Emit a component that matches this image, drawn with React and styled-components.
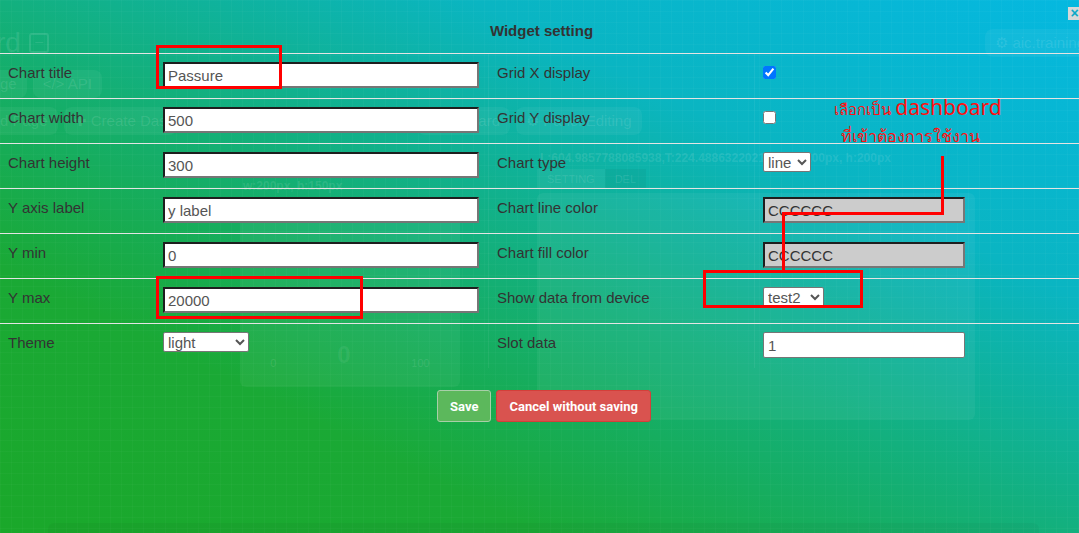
import styled, { createGlobalStyle } from "styled-components";

const GlobalStyle = createGlobalStyle`
  html, body {
    margin: 0;
    padding: 0;
  }
  body {
    width: 1079px;
    height: 533px;
    overflow: hidden;
    font-family: "Liberation Sans", Arial, sans-serif;
  }
`;

const rows = [
  { label: "Chart title", value: "Passure", right: "Grid X display", kind: "check", checked: true },
  { label: "Chart width", value: "500", right: "Grid Y display", kind: "check", checked: false },
  { label: "Chart height", value: "300", right: "Chart type", kind: "select", options: ["line"], w: 48 },
  { label: "Y axis label", value: "y label", right: "Chart line color", kind: "color", color: "CCCCCC" },
  { label: "Y min", value: "0", right: "Chart fill color", kind: "color", color: "CCCCCC" },
  { label: "Y max", value: "20000", right: "Show data from device", kind: "select", options: ["test2"], w: 61 },
  { label: "Theme", select: ["light"], right: "Slot data", kind: "slot", value2: "1" },
];

export default function App() {
  return (
    <Page>
      <GlobalStyle />
      <Dashboard>
        <GhostHeader>
          <GhostTitle>
            rd <GhostIcon>−</GhostIcon>
          </GhostTitle>
          <GhostPill>⚙ aic.training</GhostPill>
        </GhostHeader>
        <GhostRow $y={70} $x={-10}>
          <GhostPill>ge</GhostPill>
          <GhostPill>&lt;/&gt; API</GhostPill>
        </GhostRow>
        <GhostRow $y={107} $x={-10}>
          <GhostPill>d Page</GhostPill>
          <GhostPill $gap={234}>✚ Create Das</GhostPill>
          <GhostPill>Dashboard</GhostPill>
          <GhostPill>⚙ Panel Editing</GhostPill>
        </GhostRow>
        <Widget $x={240} $y={179} $w={220} $h={208}>
          <GhostText>w:200px, h:150px</GhostText>
          <GhostPanel>
            <GaugeRow>
              <span>0</span>
              <strong>0</strong>
              <span>100</span>
            </GaugeRow>
          </GhostPanel>
        </Widget>
        <Widget $x={537} $y={151} $w={438} $h={269}>
          <GhostText>L:604.9857788085938,T:224.4886322021484, w:200px, h:200px</GhostText>
          <GhostTabs>
            <span>SETTING</span>
            <b>DEL</b>
          </GhostTabs>
          <GhostPanel />
        </Widget>
        <GhostBar />
      </Dashboard>

      <Modal>
        <CloseBox>×</CloseBox>
        <Title>Widget setting</Title>
        <Table>
          {rows.map((r) => (
            <Row key={r.label}>
              <Cell>
                <Label>{r.label}</Label>
              </Cell>
              <Cell>
                {r.select ? (
                  <Select $w={86} defaultValue={r.select[0]}>
                    {r.select.map((o) => (
                      <option key={o}>{o}</option>
                    ))}
                  </Select>
                ) : (
                  <TextInput readOnly value={r.value} />
                )}
              </Cell>
              <Cell $divider>
                <Label>{r.right}</Label>
              </Cell>
              <Cell $divider>
                {r.kind === "check" && <Check type="checkbox" readOnly checked={r.checked} />}
                {r.kind === "select" && (
                  <Select $w={r.w} defaultValue={r.options[0]}>
                    {r.options.map((o) => (
                      <option key={o}>{o}</option>
                    ))}
                  </Select>
                )}
                {r.kind === "color" && <ColorInput readOnly value={r.color} />}
                {r.kind === "slot" && <SlotInput readOnly value={r.value2} />}
              </Cell>
            </Row>
          ))}
        </Table>
        <Actions>
          <Button $variant="save">Save</Button>
          <Button $variant="cancel">Cancel without saving</Button>
        </Actions>
      </Modal>

      <Mark $x={156} $y={45} $w={126} $h={44} />
      <Mark $x={156} $y={276} $w={207} $h={43} />
      <Mark $x={703} $y={270} $w={160} $h={38} />
      <Connector width="1079" height="533" viewBox="0 0 1079 533">
        <polyline
          points="942.5,156 942.5,213.5 783.5,213.5 783.5,271"
          fill="none"
          stroke="#ff0000"
          strokeWidth="3"
        />
      </Connector>
      <Note>
        <NoteLine>
          เลือกเป็น <Big>dashboard</Big>
        </NoteLine>
        <NoteLine $second>ที่เข้าต้องการใช้งาน</NoteLine>
      </Note>
    </Page>
  );
}

const Page = styled.div`
  position: relative;
  width: 1079px;
  height: 533px;
  overflow: hidden;
  background-image: linear-gradient(rgba(255, 255, 255, 0.025) 1px, transparent 1px),
    linear-gradient(90deg, rgba(255, 255, 255, 0.025) 1px, transparent 1px),
    linear-gradient(
      to top right,
      #1aa82a 0%,
      #1aa935 25%,
      #13b07e 50%,
      #0ab5c2 72%,
      #05b8e0 100%
    );
  background-size: 11px 11px, 11px 11px, 100% 100%;
`;

/* faint dashboard behind the modal */
const Dashboard = styled.div`
  position: absolute;
  inset: 0;
  color: rgba(255, 255, 255, 0.11);
  font-family: "Liberation Sans", Arial, sans-serif;
`;

const GhostHeader = styled.div`
  display: flex;
  justify-content: space-between;
  align-items: center;
  padding: 27px 0 0 0;
  margin: 0 -16px 0 -4px;
`;

const GhostTitle = styled.div`
  font-size: 28px;
  display: flex;
  align-items: center;
  gap: 8px;
`;

const GhostIcon = styled.span`
  width: 16px;
  height: 16px;
  border: 2px solid rgba(255, 255, 255, 0.11);
  border-radius: 3px;
  font-size: 16px;
  line-height: 15px;
  text-align: center;
`;

const GhostRow = styled.div`
  position: absolute;
  left: ${(p) => p.$x}px;
  top: ${(p) => p.$y}px;
  display: flex;
  gap: 6px;
`;

const GhostPill = styled.div`
  height: 28px;
  border-radius: 8px;
  background: rgba(255, 255, 255, 0.05);
  font-size: 15px;
  line-height: 28px;
  padding: 0 10px;
  margin-right: ${(p) => p.$gap || 0}px;
  white-space: nowrap;
`;

const Widget = styled.div`
  position: absolute;
  left: ${(p) => p.$x}px;
  top: ${(p) => p.$y}px;
  width: ${(p) => p.$w}px;
  height: ${(p) => p.$h}px;
  display: flex;
  flex-direction: column;
  gap: 4px;
`;

const GhostText = styled.div`
  font-size: 12px;
  font-weight: bold;
  white-space: nowrap;
  padding-left: 3px;
`;

const GhostTabs = styled.div`
  display: flex;
  font-size: 11px;
  span,
  b {
    padding: 4px 10px;
    background: rgba(255, 255, 255, 0.05);
    font-weight: normal;
  }
  b {
    background: rgba(0, 0, 0, 0.04);
  }
`;

const GhostPanel = styled.div`
  flex: 1;
  border-radius: 6px;
  background: rgba(255, 255, 255, 0.05);
  display: flex;
  align-items: flex-end;
`;

const GaugeRow = styled.div`
  width: 100%;
  display: flex;
  justify-content: space-around;
  align-items: flex-end;
  padding-bottom: 18px;
  font-size: 11px;
  strong {
    font-size: 24px;
    color: rgba(255, 255, 255, 0.07);
  }
`;

const GhostBar = styled.div`
  position: absolute;
  left: 48px;
  right: 40px;
  bottom: -20px;
  height: 30px;
  border-radius: 6px;
  background: rgba(0, 0, 0, 0.03);
`;

/* modal */
const Modal = styled.div`
  position: absolute;
  inset: 0;
  display: flex;
  flex-direction: column;
`;

const CloseBox = styled.div`
  position: absolute;
  right: -2px;
  top: 7px;
  width: 13px;
  height: 13px;
  background: #d8d8d8;
  color: #0aa9c8;
  font-size: 14px;
  font-weight: bold;
  line-height: 12px;
  text-align: center;
`;

const Title = styled.div`
  height: 53px;
  box-sizing: border-box;
  padding: 21px 0 0 4px;
  text-align: center;
  font-size: 15px;
  line-height: 20px;
  font-weight: bold;
  color: #333;
`;

const Table = styled.div`
  display: grid;
  grid-template-columns: 155px 334px 266px 1fr;
`;

const Row = styled.div`
  display: contents;
`;

const Cell = styled.div`
  height: 45px;
  box-sizing: border-box;
  padding: 8px;
  border-top: 1px solid #e4e4e4;
  border-left: ${(p) => (p.$divider ? "1px solid rgba(255,255,255,0.06)" : "none")};
  margin-left: ${(p) => (p.$divider ? "-1px" : "0")};
`;

const Label = styled.div`
  font-size: 15px;
  line-height: 22px;
  color: #333;
  white-space: nowrap;
`;

const TextInput = styled.input`
  display: block;
  width: 316px;
  height: 26px;
  box-sizing: border-box;
  margin: 0;
  padding: 0 3px;
  border-style: solid;
  border-width: 2px;
  border-color: #1e1e1e #767676 #767676 #1e1e1e;
  background: #fff;
  font-family: "Liberation Sans", Arial, sans-serif;
  font-size: 15px;
  color: #555;
  outline: none;
`;

const ColorInput = styled(TextInput)`
  width: 202px;
  background: #cccccc;
  color: #333;
`;

const SlotInput = styled.input`
  display: block;
  width: 202px;
  height: 26px;
  box-sizing: border-box;
  margin: 0;
  padding: 0 4px;
  border: 1px solid #767676;
  border-radius: 2px;
  background: #fff;
  font-family: "Liberation Sans", Arial, sans-serif;
  font-size: 15px;
  color: #555;
  outline: none;
`;

const Select = styled.select`
  display: block;
  width: ${(p) => p.$w}px;
  height: 20px;
  margin: 0;
  padding: 0;
  font-family: "Liberation Sans", Arial, sans-serif;
  font-size: 15px;
  color: #555;
  background: #fff;
  border: 1px solid #767676;
  border-radius: 2px;
`;

const Check = styled.input`
  display: block;
  width: 13px;
  height: 13px;
  margin: 4px 0 0 0;
`;

const Actions = styled.div`
  display: flex;
  justify-content: center;
  gap: 5px;
  margin-top: 22px;
  padding-left: 9px;
`;

const Button = styled.button`
  height: 32px;
  padding: 0 12px;
  border-radius: 3px;
  border: 1px solid ${(p) => (p.$variant === "save" ? "#a9cfa9" : "#d43f3a")};
  background: ${(p) => (p.$variant === "save" ? "#5cb85c" : "#d9534f")};
  color: #fff;
  font-family: Roboto, "Liberation Sans", Arial, sans-serif;
  font-size: 13px;
  font-weight: bold;
`;

/* red annotations */
const Mark = styled.div`
  position: absolute;
  left: ${(p) => p.$x}px;
  top: ${(p) => p.$y}px;
  width: ${(p) => p.$w}px;
  height: ${(p) => p.$h}px;
  box-sizing: border-box;
  border: 3px solid #ff0000;
`;

const Connector = styled.svg`
  position: absolute;
  left: 0;
  top: 0;
  pointer-events: none;
`;

const Note = styled.div`
  position: absolute;
  left: 823px;
  top: 93px;
  width: 190px;
  text-align: center;
  color: #ff1010;
`;

const NoteLine = styled.div`
  font-family: "Noto Sans", "DejaVu Sans", sans-serif;
  font-size: ${(p) => (p.$second ? "16px" : "15px")};
  line-height: ${(p) => (p.$second ? "26px" : "28px")};
  padding-right: ${(p) => (p.$second ? "16px" : "0")};
  white-space: nowrap;
`;

const Big = styled.span`
  font-size: 21px;
`;
